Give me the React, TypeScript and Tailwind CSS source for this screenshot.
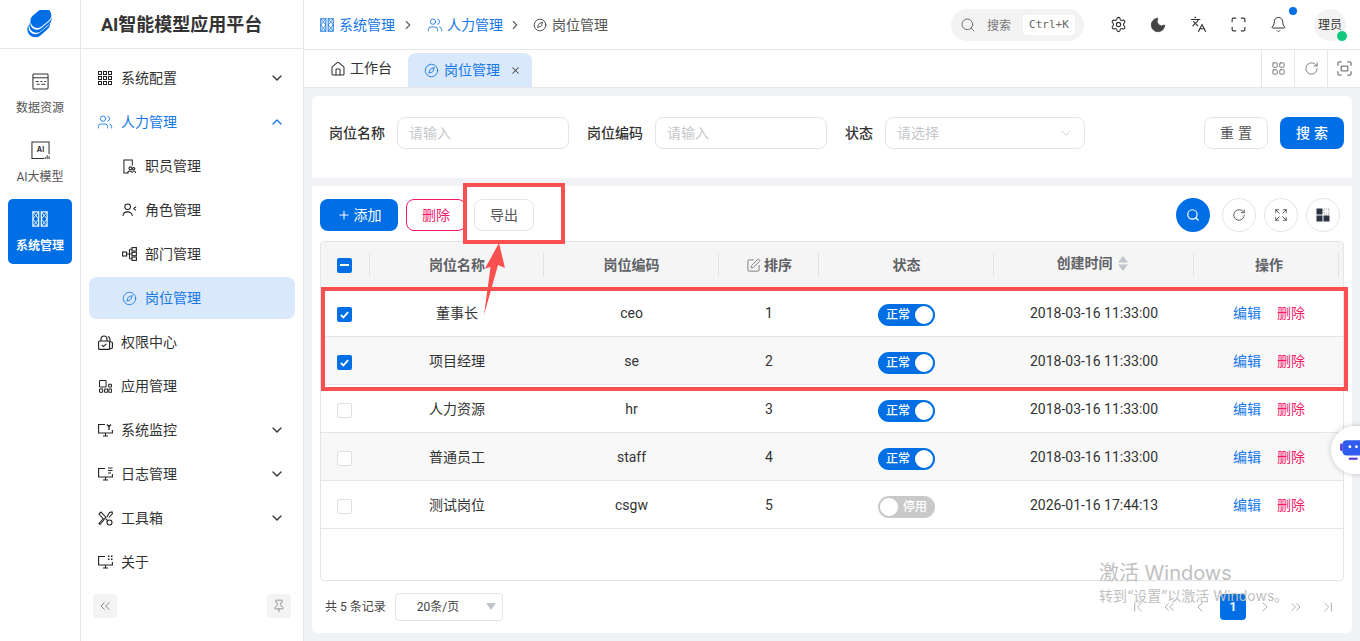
import React from "react";
import {
  ChevronDown, ChevronUp, ChevronRight, ChevronLeft, ChevronsLeft, ChevronsRight, ChevronFirst, ChevronLast, Users, Compass,
  Search, Settings, Moon, Languages, Maximize, Bell, Home, X, LayoutGrid, RotateCw, Plus, Expand, SquarePen, Pin,
} from "lucide-react";

const FONT = "font-['Roboto','Noto_Sans_CJK_SC',sans-serif]";

function SysIcon({ className = "" }: { className?: string }) {
  return (
    <svg viewBox="0 0 18 18" className={className} fill="none" stroke="currentColor" strokeWidth="1.3">
      <rect x="1" y="1" width="6.5" height="16" />
      <rect x="10.5" y="1" width="6.5" height="16" />
      <path d="M1 1l6.5 8L1 17M7.5 1L1 9l6.5 8M10.5 1L17 9l-6.5 8M17 1l-6.5 8L17 17" strokeWidth="1" />
    </svg>
  );
}
function DataIcon() {
  return (
    <svg viewBox="0 0 18 18" className="w-[17px] h-[17px]" fill="none" stroke="#333" strokeWidth="1.1">
      <rect x="1" y="1" width="16" height="16" rx="1" />
      <path d="M1 5h16M4 9h3M9 9h2M13 9h2M5 12h3M10 12h4" />
    </svg>
  );
}
function AiIcon() {
  return (
    <svg viewBox="0 0 20 20" className="w-[19px] h-[19px]" fill="none" stroke="#333" strokeWidth="1.1">
      <path d="M14 18.5H1V1h18v13" />
      <path d="M15 19v-2M17 19v-4M19 19v-3" />
      <text x="10" y="12" fontSize="7.5" fontWeight="700" textAnchor="middle" fill="#333" stroke="none" fontFamily="Inter">AI</text>
    </svg>
  );
}
function GridIcon() {
  return (
    <svg viewBox="0 0 14 14" className="w-[14px] h-[14px]" fill="none" stroke="#222" strokeWidth="1">
      {[0, 5, 10].map((y) => [0, 5, 10].map((x) => <rect key={`${x}${y}`} x={x + 0.5} y={y + 0.5} width="3" height="3" />))}
    </svg>
  );
}
function EmpIcon() {
  return (
    <svg viewBox="0 0 14 16" className="w-[13px] h-[15px]" fill="none" stroke="#222" strokeWidth="1.1">
      <path d="M6 15H1V1h9v6" />
      <circle cx="8" cy="10" r="1.6" /><circle cx="11.5" cy="10.5" r="1.3" />
      <path d="M5 15c0-3 5-3 5 0M10.5 13c2-.5 3 .5 3 2" />
    </svg>
  );
}
function RoleIcon() {
  return (
    <svg viewBox="0 0 16 15" className="w-[15px] h-[14px]" fill="none" stroke="#222" strokeWidth="1.1">
      <circle cx="6" cy="4" r="3" />
      <path d="M1 14c0-6 10-6 10 0M15 4l-2.5 2 2.5 2" />
    </svg>
  );
}
function DeptIcon() {
  return (
    <svg viewBox="0 0 15 14" className="w-[15px] h-[14px]" fill="none" stroke="#222" strokeWidth="1.1">
      <rect x="0.6" y="5" width="4" height="4" /><rect x="10" y="0.6" width="4.4" height="3.4" /><rect x="10" y="5.3" width="4.4" height="3.4" /><rect x="10" y="10" width="4.4" height="3.4" />
      <path d="M4.6 7H10M7.5 2.3V11.7M7.5 2.3H10M7.5 11.7H10" />
    </svg>
  );
}
function LockIcon() {
  return (
    <svg viewBox="0 0 15 15" className="w-[15px] h-[15px]" fill="none" stroke="#222" strokeWidth="1.1">
      <rect x="0.6" y="6" width="11" height="8.4" rx="1" />
      <path d="M3 6V4a3 3 0 016 0v2M10 1.5a3 3 0 012 2.5v2.5l2.4 1V13l-2.4 1" />
      <path d="M3.8 10l1.6 1.6L8.4 8.8" />
    </svg>
  );
}
function AppIcon() {
  return (
    <svg viewBox="0 0 14 14" className="w-[13px] h-[13px]" fill="none" stroke="#222" strokeWidth="1.1">
      <rect x="0.6" y="0.6" width="7" height="7" rx="0.5" /><rect x="0.6" y="9.6" width="3.4" height="3.6" rx="0.5" /><rect x="6" y="9.6" width="3.4" height="3.6" rx="0.5" /><rect x="10.4" y="4.6" width="3" height="3" rx="0.5" /><rect x="10.6" y="9.6" width="3" height="3.6" rx="0.5" />
    </svg>
  );
}
function ScreenIcon({ kind }: { kind: "mon" | "log" | "about" }) {
  return (
    <svg viewBox="0 0 15 14" className="w-[15px] h-[14px]" fill="none" stroke="#222" strokeWidth="1.1">
      <path d="M14.4 7v3H.6V1.5H7M5 13h5M7.5 10v3" />
      {kind === "mon" && <path d="M9 1.5l2 2 2-2M11 3.5V7" strokeWidth="1.3" />}
      {kind === "log" && <path d="M10 1h4.5M10 3.5h4.5M10 6h3" />}
      {kind === "about" && <path d="M10 .5h1.5v1.5H10zM13 .5h1.5v1.5H13zM13 3.5h1.5V5H13zM10 3.5h1.5V5H10z" fill="#222" stroke="none" />}
    </svg>
  );
}
function ToolIcon() {
  return (
    <svg viewBox="0 0 15 15" className="w-[15px] h-[15px]" fill="none" stroke="#222" strokeWidth="1.1">
      <path d="M1 3L3 1l5 5.5-2 2zM9 6l2.5-4.5L14 1l.5 1.5L11 6.5M6 9l-4 4.5-1-1L5 8" />
      <circle cx="11.5" cy="11.5" r="2.5" />
      <path d="M9.5 9.5L8 8" />
    </svg>
  );
}
function ScanIcon() {
  return (
    <svg viewBox="0 0 16 16" className="w-[15px] h-[15px]" fill="none" stroke="#7d7d7d" strokeWidth="1.4">
      <path d="M1 5V2.5A1.5 1.5 0 012.5 1H5M11 1h2.5A1.5 1.5 0 0115 2.5V5M15 11v2.500A1.5 1.5 0 0113.5 15H11M5 15H2.500A1.5 1.5 0 011 13.500V11" />
      <rect x="4.500" y="5.500" width="7" height="5" rx="0.5" />
    </svg>
  );
}
function Logo() {
  return (
    <svg viewBox="0 0 28 28" className="w-[28px] h-[28px]">
      <g transform="rotate(-40 14 14)">
        <rect x="-1" y="7" width="25" height="16" rx="8" fill="#006ee5" />
        <rect x="1.500" y="6.500" width="25" height="14" rx="7" fill="#fff" />
        <rect x="3" y="6" width="25" height="14" rx="7" fill="#006ee5" />
        <rect x="5.500" y="5" width="24" height="13" rx="6.500" fill="#fff" />
        <rect x="7" y="3" width="23" height="14" rx="7" fill="#006ee5" />
      </g>
    </svg>
  );
}

function RailItem({ icon, label, active }: { icon: React.ReactNode; label: string; active?: boolean }) {
  return (
    <div className={`w-[64px] h-[65px] rounded-[5px] flex flex-col items-center justify-center gap-[9px] ${active ? "bg-[#006ee5] text-white font-bold" : "text-[#555]"}`}>
      <div className="h-[20px] flex items-center justify-center">{icon}</div>
      <span className="text-[12px] leading-[16px]">{label}</span>
    </div>
  );
}

function MenuItem({ icon, label, arrow, blue }: { icon: React.ReactNode; label: string; arrow?: "down" | "up"; blue?: boolean }) {
  return (
    <div className={`h-[44px] flex items-center pl-[8px] pr-[10px] ${blue ? "text-[#1677e5]" : "text-[#333]"}`}>
      <span className="w-[16px] flex justify-center shrink-0">{icon}</span>
      <span className="ml-[8px] text-[14px] flex-1">{label}</span>
      {arrow === "down" && <ChevronDown size={16} strokeWidth={2} className="text-[#333]" />}
      {arrow === "up" && <ChevronUp size={16} strokeWidth={2} />}
    </div>
  );
}
function SubItem({ icon, label, active }: { icon: React.ReactNode; label: string; active?: boolean }) {
  return (
    <div className={`h-[42px] my-[1px] rounded-[8px] flex items-center pl-[32px] ${active ? "bg-[#d9e8fb] text-[#1677e5]" : "text-[#333]"}`}>
      <span className="w-[16px] flex justify-center shrink-0">{icon}</span>
      <span className="ml-[8px] text-[14px]">{label}</span>
    </div>
  );
}
function Field({ label, ph, w, select }: { label: string; ph: string; w: string; select?: boolean }) {
  return (
    <div className="flex items-center">
      <span className="text-[14px] font-medium text-[#333] mr-[12px]">{label}</span>
      <div className={`${w} h-[32px] border border-[#e3e5e8] rounded-[8px] flex items-center justify-between pl-[11px] pr-[10px]`}>
        <span className="text-[14px] text-[#c5c7cb]">{ph}</span>
        {select && <ChevronDown size={16} strokeWidth={1.2} className="text-[#c5c7cb]" />}
      </div>
    </div>
  );
}
function Check({ on }: { on?: boolean }) {
  return on ? (
    <div className="w-[15px] h-[15px] rounded-[2px] bg-[#006ee5] flex items-center justify-center">
      <svg viewBox="0 0 12 12" className="w-[11px] h-[11px]" fill="none" stroke="#fff" strokeWidth="2"><path d="M2 6.500l2.800 2.600L10 3.500" /></svg>
    </div>
  ) : (
    <div className="w-[15px] h-[15px] rounded-[2px] border border-[#dcdfe3] bg-white" />
  );
}
function Toggle({ on }: { on: boolean }) {
  return on ? (
    <div className="w-[57px] h-[22px] rounded-full bg-[#006ee5] flex items-center justify-between pl-[8px] pr-[2px]">
      <span className="text-[12px] font-medium text-white">正常</span>
      <span className="w-[18px] h-[18px] rounded-full bg-white" />
    </div>
  ) : (
    <div className="w-[57px] h-[22px] rounded-full bg-[#c9c9c9] flex items-center justify-between pl-[2px] pr-[8px]">
      <span className="w-[18px] h-[18px] rounded-full bg-white" />
      <span className="text-[12px] font-medium text-white">停用</span>
    </div>
  );
}
const GRID = "grid grid-cols-[49px_174px_175px_100px_175px_200px_1fr] items-center";
const rows = [
  { n: "董事长", c: "ceo", s: 1, on: true, t: "2018-03-16 11:33:00", ck: true },
  { n: "项目经理", c: "se", s: 2, on: true, t: "2018-03-16 11:33:00", ck: true },
  { n: "人力资源", c: "hr", s: 3, on: true, t: "2018-03-16 11:33:00" },
  { n: "普通员工", c: "staff", s: 4, on: true, t: "2018-03-16 11:33:00" },
  { n: "测试岗位", c: "csgw", s: 5, on: false, t: "2026-01-16 17:44:13" },
];
function Head({ children, last }: { children: React.ReactNode; last?: boolean }) {
  return (
    <div className={`h-[24px] relative flex items-center justify-center text-[14px] font-bold text-[#606266] ${last ? "pl-[1px]" : ""}`}>
      {children}
      <span className={`absolute top-0 w-px h-[24px] bg-[#e1e3e6] ${last ? "right-[4px]" : "right-0"}`} />
    </div>
  );
}
function RoundBtn({ children, blue }: { children: React.ReactNode; blue?: boolean }) {
  return (
    <div className={`w-[34px] h-[34px] rounded-full flex items-center justify-center ${blue ? "bg-[#006ee5] text-white mr-[4px]" : "border border-[#e3e5e8] text-[#333]"}`}>{children}</div>
  );
}

export default function App() {
  return (
    <div className={`w-[1360px] h-[641px] overflow-hidden flex bg-white relative ${FONT}`}>
      {/* rail */}
      <aside className="w-[81px] shrink-0 border-r border-[#e5e6e8] flex flex-col items-center">
        <div className="h-[49px] w-full border-b border-[#e5e6e8] flex items-center justify-center"><Logo /></div>
        <div className="flex flex-col items-center gap-[4px] mt-[12px]">
          <RailItem icon={<DataIcon />} label="数据资源" />
          <RailItem icon={<AiIcon />} label="AI大模型" />
          <RailItem icon={<SysIcon className="w-[16px] h-[16px]" />} label="系统管理" active />
        </div>
      </aside>
      {/* submenu */}
      <aside className="w-[223px] shrink-0 border-r border-[#e5e6e8] flex flex-col">
        <div className="h-[49px] border-b border-[#e5e6e8] flex items-center pl-[20px] text-[18px] font-bold text-[#333]">AI智能模型应用平台</div>
        <nav className="pt-[7px] px-[8px] flex-1 flex flex-col">
          <MenuItem icon={<GridIcon />} label="系统配置" arrow="down" />
          <MenuItem icon={<Users size={16} strokeWidth={1.3} />} label="人力管理" arrow="up" blue />
          <SubItem icon={<EmpIcon />} label="职员管理" />
          <SubItem icon={<RoleIcon />} label="角色管理" />
          <SubItem icon={<DeptIcon />} label="部门管理" />
          <SubItem icon={<Compass size={15} strokeWidth={1.3} />} label="岗位管理" active />
          <MenuItem icon={<LockIcon />} label="权限中心" />
          <MenuItem icon={<AppIcon />} label="应用管理" />
          <MenuItem icon={<ScreenIcon kind="mon" />} label="系统监控" arrow="down" />
          <MenuItem icon={<ScreenIcon kind="log" />} label="日志管理" arrow="down" />
          <MenuItem icon={<ToolIcon />} label="工具箱" arrow="down" />
          <MenuItem icon={<ScreenIcon kind="about" />} label="关于" />
        </nav>
        <div className="h-[47px] px-[12px] flex justify-between items-start">
          <div className="w-[24px] h-[24px] rounded-[4px] bg-[#f3f3f3] flex items-center justify-center"><ChevronsLeft size={16} strokeWidth={1.3} className="text-[#777]" /></div>
          <div className="w-[24px] h-[24px] rounded-[4px] bg-[#f3f3f3] flex items-center justify-center"><Pin size={14} strokeWidth={1.3} className="text-[#777]" /></div>
        </div>
      </aside>
      {/* main */}
      <main className="flex-1 flex flex-col min-w-0">
        <header className="h-[50px] shrink-0 border-b border-[#e5e6e8] flex items-center pl-[16px] pr-[14px]">
          <SysIcon className="w-[14px] h-[14px] text-[#1677e5]" />
          <span className="ml-[5px] mt-[2px] text-[14px] text-[#1677e5]">系统管理</span>
          <ChevronRight size={14} className="text-[#666] ml-[6px] mr-[12px]" />
          <Users size={16} strokeWidth={1.3} className="text-[#1677e5]" />
          <span className="ml-[4px] mt-[2px] text-[14px] text-[#1677e5]">人力管理</span>
          <ChevronRight size={14} className="text-[#666] ml-[5px] mr-[11px]" />
          <Compass size={14} strokeWidth={1.4} className="text-[#333]" />
          <span className="ml-[5px] mt-[2px] text-[14px] text-[#555]">岗位管理</span>
          <div className="ml-auto flex items-center">
            <div className="w-[133px] h-[32px] rounded-full bg-[#f3f3f3] flex items-center pl-[9px]">
              <Search size={16} strokeWidth={1.4} className="text-[#666]" />
              <span className="ml-[11px] mt-[2px] text-[12px] text-[#777]">搜索</span>
              <span className="ml-[12px] h-[20px] px-[6px] rounded-[4px] bg-white text-[11px] leading-[20px] text-[#666] font-['DejaVu_Sans_Mono',monospace]">Ctrl+K</span>
            </div>
            <Settings size={17} strokeWidth={1.6} className="ml-[26px] text-[#333]" />
            <Moon size={18} fill="#444" strokeWidth={1} className="ml-[22px] text-[#444]" />
            <Languages size={17} strokeWidth={1.6} className="ml-[23px] text-[#333]" />
            <Maximize size={17} strokeWidth={1.6} className="ml-[23px] text-[#333]" />
            <span className="relative ml-[23px] flex">
              <Bell size={17} strokeWidth={1.4} className="text-[#333]" />
              <span className="absolute -right-[10px] -top-[9px] w-[8px] h-[8px] rounded-full bg-[#006ee5]" />
            </span>
            <div className="relative ml-[27px] w-[32px] h-[32px] rounded-full bg-[#f3f3f3] flex items-center justify-center text-[12px] text-[#333]">
              理员
              <span className="absolute right-[-2px] bottom-[-1px] w-[10px] h-[10px] rounded-full bg-[#10c97f] border border-white box-content" />
            </div>
          </div>
        </header>
        <div className="h-[38px] shrink-0 border-b border-[#e5e6e8] flex items-end">
          <div className="h-[37px] flex items-center pl-[26px] pr-[16px] text-[14px] text-[#333]">
            <Home size={16} strokeWidth={1.6} />
            <span className="ml-[4px]">工作台</span>
          </div>
          <div className="h-[34px] w-[124px] bg-[#d9e8fb] rounded-t-[8px] flex items-center pl-[16px] text-[14px] text-[#1677e5]">
            <Compass size={15} strokeWidth={1.4} />
            <span className="ml-[5px]">岗位管理</span>
            <X size={11} strokeWidth={2.2} className="ml-[10px] text-[#444]" />
          </div>
          <div className="ml-auto flex h-[37px] text-[#7d7d7d]">
            <div className="w-[33px] border-l border-[#e5e6e8] flex items-center justify-center"><LayoutGrid size={15} strokeWidth={1.6} /></div>
            <div className="w-[33px] border-l border-[#e5e6e8] flex items-center justify-center"><RotateCw size={15} strokeWidth={1.6} /></div>
            <div className="w-[33px] border-l border-[#e5e6e8] flex items-center justify-center"><ScanIcon /></div>
          </div>
        </div>
        <div className="flex-1 bg-[#f0f2f5] p-[8px] flex flex-col gap-[8px] min-h-0">
          <section className="h-[82px] shrink-0 bg-white rounded-t-[6px] flex items-start pt-[21px] pl-[17px] pr-[8px]">
            <Field label="岗位名称" ph="请输入" w="w-[172px]" />
            <div className="w-[18px]" />
            <Field label="岗位编码" ph="请输入" w="w-[172px]" />
            <div className="w-[18px]" />
            <Field label="状态" ph="请选择" w="w-[200px]" select />
            <div className="ml-auto flex gap-[12px]">
              <div className="w-[64px] h-[32px] rounded-[8px] border border-[#e3e5e8] flex items-center justify-center pl-[4px] text-[14px] tracking-[4px] text-[#555]">重置</div>
              <div className="w-[64px] h-[32px] rounded-[8px] bg-[#006ee5] flex items-center justify-center pl-[4px] text-[14px] font-medium tracking-[4px] text-white">搜索</div>
            </div>
          </section>
          <section className="flex-1 bg-white rounded-b-[6px] px-[8px] flex flex-col min-h-0">
            <div className="h-[55px] shrink-0 flex items-end pb-[10px] justify-between">
              <div className="flex gap-[8px] items-center">
                <div className="w-[78px] h-[32px] rounded-[8px] bg-[#006ee5] flex items-center justify-center text-[14px] text-white">
                  <Plus size={14} strokeWidth={1.8} /><span className="ml-[3px]">添加</span>
                </div>
                <div className="w-[60px] h-[32px] rounded-[8px] border border-[#f5196b] flex items-center justify-center text-[14px] text-[#f5196b]">删除</div>
                <div className="w-[60px] h-[32px] rounded-[8px] border border-[#e3e5e8] flex items-center justify-center text-[14px] text-[#555]">导出</div>
              </div>
              <div className="flex gap-[8px] pr-[4px] mb-[-1px]">
                <RoundBtn blue><Search size={14} strokeWidth={2} /></RoundBtn>
                <RoundBtn><RotateCw size={14} strokeWidth={1.3} /></RoundBtn>
                <RoundBtn><Expand size={14} strokeWidth={1.3} /></RoundBtn>
                <RoundBtn>
                  <svg viewBox="0 0 14 14" className="w-[14px] h-[14px]"><rect x="0.5" y="0.5" width="6" height="6" fill="#2b3440" /><rect x="7.5" y="7.5" width="6" height="6" fill="#2b3440" /><rect x="0.5" y="7.5" width="6" height="6" fill="#2b3440" /><rect x="8" y="1" width="5" height="5" fill="none" stroke="#999" strokeWidth="1" strokeDasharray="1 1" /></svg>
                </RoundBtn>
              </div>
            </div>
            <div className="h-[340px] shrink-0 border border-[#e3e5e8] rounded-[4px] overflow-hidden">
              <div className={`${GRID} h-[47px] bg-[#f5f5f5] border-b border-[#e8e8e8]`}>
                <div className="h-[24px] relative flex items-center justify-center pr-[2px]">
                  <div className="w-[15px] h-[15px] rounded-[2px] bg-[#006ee5] flex items-center justify-center"><span className="w-[9px] h-[2px] bg-white" /></div>
                  <span className="absolute right-0 top-0 w-px h-[24px] bg-[#e1e3e6]" />
                </div>
                <Head>岗位名称</Head>
                <Head>岗位编码</Head>
                <Head><SquarePen size={15} strokeWidth={1.5} className="mr-[3px] text-[#777]" />排序</Head>
                <Head>状态</Head>
                <Head>
                  <span className="mb-[4px] flex items-center mr-[3px]">
                    创建时间
                    <svg viewBox="0 0 12 15" className="w-[12px] h-[15px] ml-[4px]"><path d="M6 0l5 6.500H1zM6 15l5-6.500H1z" fill="#c0c4cc" /></svg>
                  </span>
                </Head>
                <Head last>操作</Head>
              </div>
              {rows.map((r, i) => (
                <div key={r.c} className={`${GRID} h-[48px] border-b border-[#e5e6e8] text-[14px] text-[#333] ${i % 2 === 1 ? "bg-[#f8f8f8]" : "bg-white"}`}>
                  <div className="flex justify-center pr-[2px] mt-[4px]"><Check on={r.ck} /></div>
                  <div className="text-center mt-[2px]">{r.n}</div>
                  <div className="text-center mt-[2px]">{r.c}</div>
                  <div className="text-center mt-[2px]">{r.s}</div>
                  <div className="flex justify-center mt-[4px]"><Toggle on={r.on} /></div>
                  <div className="text-center mt-[2px]">{r.t}</div>
                  <div className="flex justify-center gap-[16px] pl-[1px] mt-[2px]">
                    <span className="text-[#1677e5]">编辑</span>
                    <span className="text-[#f5196b]">删除</span>
                  </div>
                </div>
              ))}
            </div>
            <div className="flex-1 flex items-center justify-between pl-[5px] pr-[8px]">
              <div className="flex items-center">
                <span className="text-[12px] text-[#444]">共 5 条记录</span>
                <div className="ml-[9px] w-[108px] h-[28px] rounded-[4px] border border-[#e3e5e8] flex items-center pl-[21px] text-[12px] text-[#444] relative">
                  20条/页
                  <svg viewBox="0 0 10 7" className="absolute right-[6px] top-[9px] w-[10px] h-[7px]"><path d="M0 0h10L5 7z" fill="#c0c4cc" /></svg>
                </div>
              </div>
              <div className="flex items-center gap-[15px] text-[#999]">
                <ChevronFirst size={16} strokeWidth={1.2} />
                <ChevronsLeft size={16} strokeWidth={1.2} />
                <ChevronLeft size={16} strokeWidth={1.2} className="mr-[-3px]" />
                <div className="w-[26px] h-[26px] rounded-[4px] bg-[#006ee5] text-white text-[12px] font-bold flex items-center justify-center">1</div>
                <ChevronRight size={16} strokeWidth={1.2} className="ml-[-4px]" />
                <ChevronsRight size={16} strokeWidth={1.2} />
                <ChevronLast size={16} strokeWidth={1.2} className="ml-[1px]" />
              </div>
            </div>
          </section>
        </div>
      </main>

      {/* annotations */}
      <div className="absolute left-[463px] top-[183px] w-[102px] h-[61px] border-[4px] border-[#fa5050] pointer-events-none" />
      <div className="absolute left-[321px] top-[287px] w-[1027px] h-[104px] border-[4px] border-[#fa5050] pointer-events-none" />
      <svg className="absolute left-[480px] top-[240px] w-[40px] h-[80px] pointer-events-none" viewBox="0 0 40 80">
        <path d="M4 75L10.5 27 5 28.500 19 3 25 28 18 25z" fill="#fa5050" />
      </svg>

      {/* floating bot */}
      <div className="absolute left-[1331px] top-[426px] w-[50px] h-[48px] rounded-full bg-white shadow-[0_0_6px_rgba(0,0,0,0.2)] flex items-center pl-[9px]">
        <svg viewBox="0 0 20 22" className="w-[22px] h-[24px]">
          <rect x="2" y="2" width="20" height="14" rx="4" fill="#2f5bef" />
          <circle cx="9" cy="8" r="1.3" fill="#fff" /><circle cx="15" cy="8" r="1.3" fill="#fff" />
          <rect x="0" y="5" width="2" height="7" rx="1" fill="#5b3bd6" />
          <path d="M8 19h8" stroke="#5b3bd6" strokeWidth="2" />
        </svg>
      </div>

      {/* watermark */}
      <div className="absolute left-[1099px] top-[559px] pointer-events-none text-[#c0c0c0] font-['Inter','Noto_Sans_CJK_SC',sans-serif]">
        <div className="text-[20px] leading-[28px]">激活 Windows</div>
        <div className="text-[14px] leading-[20px] mt-[-1px]">转到“设置”以激活 Windows。</div>
      </div>
    </div>
  );
}
